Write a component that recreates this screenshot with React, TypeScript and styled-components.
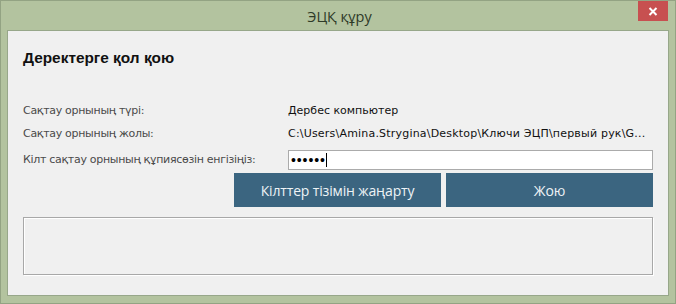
import React from 'react';
import styled, { createGlobalStyle } from 'styled-components';

const GlobalStyle = createGlobalStyle`
  html, body {
    margin: 0;
    padding: 0;
    background: #b3c39f;
  }
  * {
    box-sizing: border-box;
  }
`;

const Window = styled.div`
  width: 676px;
  height: 304px;
  display: flex;
  flex-direction: column;
  background: #b3c39f;
  border: 1px solid #93a383;
  font-family: 'DejaVu Sans', 'Noto Sans', sans-serif;
`;

const TitleBar = styled.div`
  position: relative;
  height: 29px;
  display: flex;
  align-items: center;
  justify-content: center;
  padding-top: 2px;
`;

const Title = styled.span`
  font-family: 'Open Sans', 'Noto Sans', sans-serif;
  font-size: 14.5px;
  color: #2e3a28;
  margin-left: 3px;
`;

const CloseButton = styled.div`
  position: absolute;
  top: 0;
  right: 7px;
  width: 30px;
  height: 20px;
  background: #c75050;
  display: flex;
  align-items: center;
  justify-content: center;
`;

const Panel = styled.div`
  flex: 1;
  margin: 0 6px 7px 6px;
  background: #f0f0f0;
  border: 1px solid #97a78a;
  padding: 18px 15px 16px 15px;
  display: flex;
  flex-direction: column;
`;

const Heading = styled.h1`
  margin: 0;
  height: 18px;
  line-height: 18px;
  font-family: 'Liberation Sans', Arial, sans-serif;
  font-weight: bold;
  font-size: 15.4px;
  color: #111;
`;

const Fields = styled.div`
  margin-top: 33px;
  display: grid;
  grid-template-columns: 265px 1fr;
  grid-template-rows: 20px 20px 20px;
  row-gap: 3px;
  align-items: center;
`;

const Label = styled.span<{ $shift?: number }>`
  font-size: 11px;
  letter-spacing: -0.3px;
  color: #4a4a4a;
  white-space: nowrap;
  margin-top: ${({ $shift }) => $shift || 0}px;
`;

const Value = styled.span`
  font-size: 11px;
  color: #111;
  white-space: nowrap;
  overflow: hidden;
`;

const PathValue = styled(Value)`
  letter-spacing: 0.2px;
`;

const PasswordBox = styled.div`
  height: 20px;
  margin-top: 7px;
  background: #fff;
  border: 1px solid #ababab;
  display: flex;
  align-items: center;
  padding-left: 2px;
  font-family: 'Liberation Sans', Arial, sans-serif;
  font-size: 14px;
  letter-spacing: 0.9px;
  color: #000;
`;

const Caret = styled.span`
  display: inline-block;
  width: 1px;
  height: 14px;
  background: #000;
`;

const Actions = styled.div`
  margin-top: 7px;
  display: flex;
  justify-content: flex-end;
  gap: 5px;
`;

const ActionButton = styled.button`
  width: 207px;
  height: 34px;
  border: none;
  background: #3b6580;
  color: #eef3f6;
  font-family: 'Open Sans', 'Noto Sans', sans-serif;
  font-size: 14px;
  letter-spacing: -0.15px;
  padding: 0;
`;

const LogBox = styled.div`
  margin-top: 10px;
  height: 58px;
  border: 1px solid #a8a8a8;
  box-shadow: inset 1px 1px 0 #fff, 1px 1px 0 #fff;
  background: #f0f0f0;
`;

export default function App() {
  return (
    <>
      <GlobalStyle />
      <Window>
        <TitleBar>
          <Title>ЭЦҚ құру</Title>
          <CloseButton>
            <svg width="10" height="9" viewBox="0 0 10 9">
              <path d="M1.5 1 L8.5 8 M8.5 1 L1.5 8" stroke="#fff" strokeWidth="2" />
            </svg>
          </CloseButton>
        </TitleBar>
        <Panel>
          <Heading>Деректерге қол қою</Heading>
          <Fields>
            <Label>Сақтау орнының түрі:</Label>
            <Value>Дербес компьютер</Value>
            <Label>Сақтау орнының жолы:</Label>
            <PathValue>C:\Users\Amina.Strygina\Desktop\Ключи ЭЦП\первый рук\G...</PathValue>
            <Label $shift={7}>Кілт сақтау орнының құпиясөзін енгізіңіз:</Label>
            <PasswordBox>
              ••••••<Caret />
            </PasswordBox>
          </Fields>
          <Actions>
            <ActionButton>Кілттер тізімін жаңарту</ActionButton>
            <ActionButton>Жою</ActionButton>
          </Actions>
          <LogBox />
        </Panel>
      </Window>
    </>
  );
}
